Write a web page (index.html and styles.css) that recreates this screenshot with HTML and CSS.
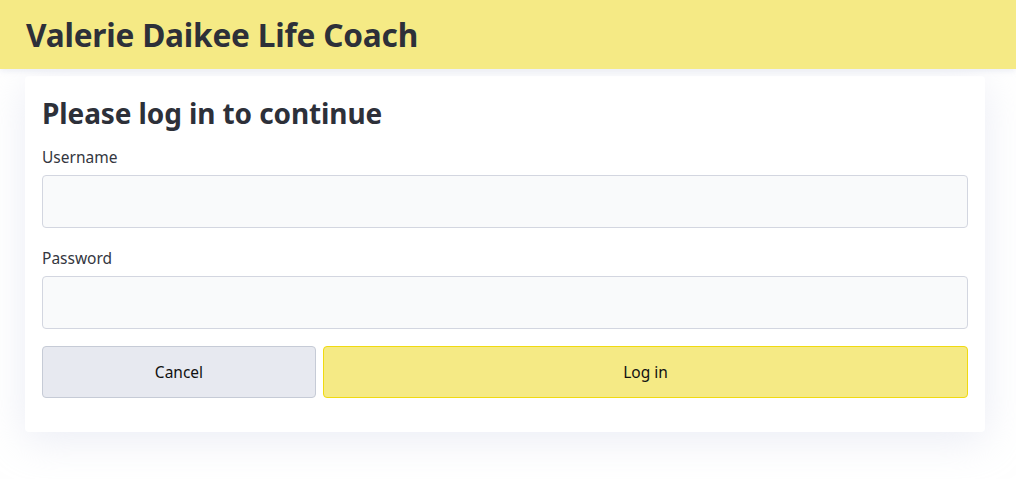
FILE: index.html
```html
<!DOCTYPE html>
<html lang="en">
<head>
<meta charset="utf-8">
<title>Valerie Daikee Life Coach</title>
<link rel="stylesheet" href="styles.css">
</head>
<body>
<header class="site-header">
  <h1 class="site-title">Valerie Daikee Life Coach</h1>
</header>
<main class="card">
  <h2 class="card-title">Please log in to continue</h2>
  <form class="login-form">
    <label class="field-label" for="username">Username</label>
    <input class="field-input" id="username" type="text">
    <label class="field-label" for="password">Password</label>
    <input class="field-input field-last" id="password" type="password">
    <div class="actions">
      <button type="button" class="btn btn-cancel">Cancel</button>
      <button type="submit" class="btn btn-login">Log in</button>
    </div>
  </form>
</main>
</body>
</html>
```
FILE: styles.css
```css
* { box-sizing: border-box; }
html, body { margin: 0; padding: 0; background: #ffffff; }
body {
  font-family: "Noto Sans", "Open Sans", sans-serif;
  color: #2d3039;
  min-height: 100vh;
  padding-bottom: 48px;
}
.site-header {
  background: #f5ea85;
  height: 69px;
  padding: 0 26px;
  display: flex;
  align-items: center;
  box-shadow: 0 2px 6px rgba(200, 205, 225, 0.35);
  position: relative;
  z-index: 1;
}
.site-title {
  margin: 0;
  font-size: 31.6px;
  font-weight: 700;
  line-height: 1;
  letter-spacing: -0.2px;
  color: #2d3039;
}
.card {
  margin: 7px 0 0 25px;
  width: 960px;
  background: #fff;
  border-radius: 4px;
  padding: 19px 17px 34px;
  box-shadow: 0 8px 40px rgba(215, 220, 236, 0.5);
}
.card-title {
  margin: 0 0 15px;
  font-size: 28px;
  font-weight: 700;
  line-height: 36px;
  letter-spacing: -0.1px;
}
.login-form {
  display: flex;
  flex-direction: column;
}
.field-label {
  font-size: 15.5px;
  line-height: 22px;
  color: #333640;
  margin-bottom: 7px;
}
.field-input {
  height: 53px;
  border: 1px solid #d3d6e0;
  border-radius: 4px;
  background: #f9fafb;
  margin: 0 0 19px;
  font: inherit;
}
.field-input.field-last { margin-bottom: 17px; }
.actions {
  display: grid;
  grid-template-columns: 274px 1fr;
  gap: 7px;
}
.btn {
  height: 52px;
  border-radius: 4px;
  font-family: inherit;
  font-size: 15.5px;
  color: #111;
}
.btn-cancel {
  background: #e7e9f0;
  border: 1px solid #c6cbd6;
}
.btn-login {
  background: #f5ea85;
  border: 1px solid #f0da10;
}
```
